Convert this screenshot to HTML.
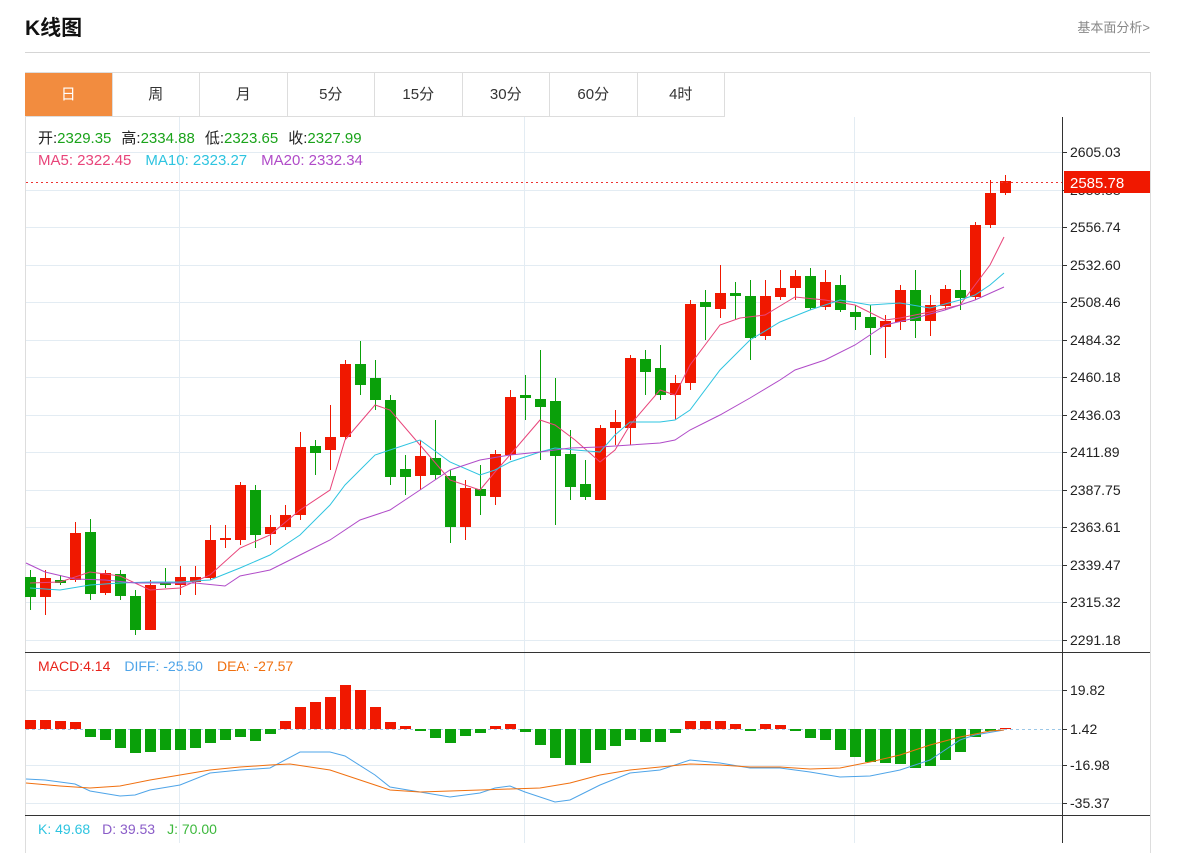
<!DOCTYPE html>
<html><head><meta charset="utf-8">
<style>
body{margin:0;background:#fff;font-family:"Liberation Sans","Noto Sans CJK SC",sans-serif;width:1202px;height:843px;overflow:hidden;position:relative}
.t{position:absolute;left:25px;top:12px;font-size:21px;font-weight:bold;color:#111}
.r{position:absolute;right:52px;top:17px;font-size:13px;color:#888}
.hl{position:absolute;left:25px;top:52px;width:1125px;height:1px;background:#d5d5d5}
.box{position:absolute;left:25px;top:72px;width:1124px;height:780px;border:1px solid #ddd;border-bottom:none}
.tabs{position:absolute;left:25px;top:72px;height:44px;display:flex;border-top:1px solid #ddd}
.tabs div{width:86.5px;height:43px;line-height:44px;text-align:center;font-size:15px;color:#333;border-right:1px solid #ddd;border-bottom:1px solid #ddd}
.tabs div.on{background:#f28c3f;color:#fff}
svg{position:absolute;left:0;top:0}
</style></head><body>
<div class="t">K线图</div><div class="r">基本面分析&gt;</div><div class="hl"></div>
<div class="box"></div>
<div class="tabs"><div class="on">日</div><div>周</div><div>月</div><div>5分</div><div>15分</div><div>30分</div><div>60分</div><div>4时</div></div>
<svg id="s" width="1202" height="843" style="top:0" font-family="Liberation Sans, Noto Sans CJK SC, sans-serif">
<g stroke="#e3ecf3" stroke-width="1">
<line x1="179.5" y1="117" x2="179.5" y2="843"/><line x1="524.5" y1="117" x2="524.5" y2="843"/><line x1="854.5" y1="117" x2="854.5" y2="843"/>
<line x1="26" y1="152.5" x2="1062" y2="152.5"/><line x1="26" y1="190.5" x2="1062" y2="190.5"/><line x1="26" y1="227.5" x2="1062" y2="227.5"/><line x1="26" y1="265.5" x2="1062" y2="265.5"/><line x1="26" y1="302.5" x2="1062" y2="302.5"/><line x1="26" y1="340.5" x2="1062" y2="340.5"/><line x1="26" y1="377.5" x2="1062" y2="377.5"/><line x1="26" y1="415.5" x2="1062" y2="415.5"/><line x1="26" y1="452.5" x2="1062" y2="452.5"/><line x1="26" y1="490.5" x2="1062" y2="490.5"/><line x1="26" y1="527.5" x2="1062" y2="527.5"/><line x1="26" y1="565.5" x2="1062" y2="565.5"/><line x1="26" y1="602.5" x2="1062" y2="602.5"/><line x1="26" y1="640.5" x2="1062" y2="640.5"/>
<line x1="26" y1="690.5" x2="1062" y2="690.5"/><line x1="26" y1="765.5" x2="1062" y2="765.5"/><line x1="26" y1="803.5" x2="1062" y2="803.5"/>
</g>
<line x1="26" y1="729.5" x2="1062" y2="729.5" stroke="#9cc8e8" stroke-dasharray="3,3"/>
<line x1="25" y1="652.5" x2="1150" y2="652.5" stroke="#333"/>
<line x1="25" y1="815.5" x2="1150" y2="815.5" stroke="#333"/>
<line x1="1062.5" y1="117" x2="1062.5" y2="843" stroke="#333"/>
<g id="cd"></g><g id="mc"></g>
<polyline fill="none" stroke="#e8447a" stroke-width="1" points="30,583 60,582 90,572 120,576 150,590 180,588 210,575 240,548 270,535 300,510 330,490 345,440 375,405 390,410 420,445 450,480 480,490 495,472 510,455 540,420 555,425 575,440 600,462 615,450 630,425 660,390 675,395 690,365 720,325 740,318 765,315 795,297 825,300 855,305 885,320 900,318 930,312 960,305 975,285 990,265 1004,237"/>
<polyline fill="none" stroke="#2ec4e0" stroke-width="1" points="30,588 60,590 90,585 120,583 150,582 180,582 210,580 240,568 270,555 300,535 330,505 345,485 375,455 390,450 420,440 450,462 480,475 495,470 510,462 540,452 555,448 575,450 600,452 615,435 630,422 660,422 675,420 690,410 720,370 750,340 780,322 810,310 840,300 870,305 900,303 930,308 960,300 975,295 990,285 1004,273"/>
<polyline fill="none" stroke="#b04bc8" stroke-width="1" points="26,563 45,572 75,579 105,580 135,583 165,583 195,583 225,586 240,576 270,570 300,555 330,540 360,520 390,510 420,490 450,470 480,460 510,455 540,452 570,448 600,447 630,445 660,443 675,440 690,430 720,415 750,398 780,380 795,370 825,360 855,345 885,325 915,318 945,310 975,300 1004,287"/>
<line x1="26" y1="182.5" x2="1062" y2="182.5" stroke="#e33" stroke-dasharray="2,3"/>
<polyline fill="none" stroke="#4ea4e8" stroke-width="1" points="26,779 45,780 75,784 90,791 120,796 135,795 150,790 180,785 210,773 240,770 270,768 300,752 330,752 345,756 375,775 390,787 420,792 450,797 480,793 495,788 510,786 525,792 555,802 570,800 600,785 630,773 660,770 690,760 720,763 750,768 780,768 810,772 840,777 870,776 900,770 930,760 945,750 960,740 975,735 1004,730"/>
<polyline fill="none" stroke="#f07010" stroke-width="1" points="26,783 60,786 90,788 120,786 150,780 180,775 210,770 240,767 270,765 290,764 330,770 360,780 390,790 420,792 450,791 480,790 510,789 540,788 570,783 600,775 630,770 660,767 690,764 720,765 750,767 780,767 810,769 840,768 870,762 900,755 930,745 960,737 990,731 1004,730"/>
<g font-size="14" fill="#222">
<text x="1070" y="157">2605.03</text><text x="1070" y="195">2580.88</text><text x="1070" y="232">2556.74</text><text x="1070" y="270">2532.60</text><text x="1070" y="307">2508.46</text><text x="1070" y="345">2484.32</text><text x="1070" y="382">2460.18</text><text x="1070" y="420">2436.03</text><text x="1070" y="457">2411.89</text><text x="1070" y="495">2387.75</text><text x="1070" y="532">2363.61</text><text x="1070" y="570">2339.47</text><text x="1070" y="607">2315.32</text><text x="1070" y="645">2291.18</text>
<text x="1070" y="695">19.82</text><text x="1070" y="734">1.42</text><text x="1070" y="770">-16.98</text><text x="1070" y="808">-35.37</text>
</g>
<g stroke="#333"><path d="M1062 152.5h5M1062 190.5h5M1062 227.5h5M1062 265.5h5M1062 302.5h5M1062 340.5h5M1062 377.5h5M1062 415.5h5M1062 452.5h5M1062 490.5h5M1062 527.5h5M1062 565.5h5M1062 602.5h5M1062 640.5h5M1062 690.5h5M1062 729.5h5M1062 765.5h5M1062 803.5h5"/></g>
<rect x="1064" y="171" width="86" height="22" fill="#f01800"/>
<text x="1070" y="188" font-size="15" fill="#fff">2585.78</text>
<g font-size="15">
<text x="38" y="143"><tspan fill="#222">开:</tspan><tspan fill="#1aa31a">2329.35</tspan><tspan fill="#222" dx="10">高:</tspan><tspan fill="#1aa31a">2334.88</tspan><tspan fill="#222" dx="10">低:</tspan><tspan fill="#1aa31a">2323.65</tspan><tspan fill="#222" dx="10">收:</tspan><tspan fill="#1aa31a">2327.99</tspan></text>
<text x="38" y="165"><tspan fill="#e8447a">MA5:  2322.45</tspan><tspan fill="#2ec4e0" dx="14">MA10:  2323.27</tspan><tspan fill="#b04bc8" dx="14">MA20:  2332.34</tspan></text>
</g>
<g font-size="14">
<text x="38" y="671"><tspan fill="#e8221a">MACD:4.14</tspan><tspan fill="#4ea4e8" dx="14">DIFF: -25.50</tspan><tspan fill="#f07010" dx="14">DEA: -27.57</tspan></text>
<text x="38" y="834"><tspan fill="#2ec4e0">K: 49.68</tspan><tspan fill="#8a5cc8" dx="12">D: 39.53</tspan><tspan fill="#3cb83c" dx="12">J: 70.00</tspan></text>
</g>
</svg>
<script>
var C=[["g",577,597,570,610],["r",578,597,570,615],["g",580,583,575,585],["r",533,580,522,582],["g",532,594,519,600],["r",573,593,570,595],["g",574,596,570,600],["g",596,630,590,635],["r",585,630,580,630],["g",582,585,568,588],["r",577,585,566,595],["r",577,582,566,595],["r",540,578,525,580],["r",538,540,525,548],["r",485,540,482,545],["g",490,535,485,548],["r",527,534,515,545],["r",515,527,505,530],["r",447,515,432,520],["g",446,453,440,475],["r",437,450,405,470],["r",364,437,360,440],["g",364,385,341,395],["g",378,400,360,410],["g",400,477,395,485],["g",469,477,455,495],["r",456,476,440,490],["g",458,475,420,480],["g",476,527,470,543],["r",488,527,480,540],["g",489,496,465,515],["r",454,497,450,505],["r",397,455,390,460],["g",395,398,375,420],["g",399,407,350,460],["g",401,456,378,525],["g",454,487,430,500],["g",484,497,460,500],["r",428,500,425,500],["r",422,428,410,445],["r",358,428,355,445],["g",359,372,350,395],["g",368,395,345,400],["r",383,395,375,420],["r",304,383,300,390],["g",302,307,290,340],["r",293,309,265,318],["g",293,296,282,320],["g",296,338,280,360],["r",296,336,280,340],["r",288,297,270,300],["r",276,288,270,300],["g",276,308,268,310],["r",282,307,270,310],["g",285,310,275,312],["g",312,317,305,330],["g",317,328,305,355],["r",321,327,315,358],["r",290,322,285,330],["g",290,321,270,338],["r",305,321,295,336],["r",289,306,285,310],["g",290,298,270,310],["r",225,297,222,300],["r",193,225,180,228],["r",181,193,175,195]];
var M=[["r",720],["r",720],["r",721],["r",722],["g",737],["g",740],["g",748],["g",753],["g",752],["g",750],["g",750],["g",748],["g",743],["g",740],["g",737],["g",741],["g",734],["r",721],["r",707],["r",702],["r",697],["r",685],["r",690],["r",707],["r",722],["r",726],["g",731],["g",738],["g",743],["g",736],["g",733],["r",726],["r",724],["g",732],["g",745],["g",758],["g",765],["g",763],["g",750],["g",746],["g",740],["g",742],["g",742],["g",733],["r",721],["r",721],["r",721],["r",724],["g",731],["r",724],["r",725],["g",731],["g",738],["g",740],["g",750],["g",757],["g",762],["g",763],["g",764],["g",768],["g",766],["g",760],["g",752],["g",737],["g",731],["r",728]];
var ns="http://www.w3.org/2000/svg",cd=document.getElementById("cd"),mc=document.getElementById("mc");
function el(g,t,a){var e=document.createElementNS(ns,t);for(var k in a)e.setAttribute(k,a[k]);g.appendChild(e);}
C.forEach(function(c,i){var x=30+i*15,col=c[0]=="r"?"#f01800":"#0aa00a";
el(cd,"line",{x1:x+.5,x2:x+.5,y1:c[3],y2:c[4],stroke:col});
el(cd,"rect",{x:x-5,y:c[1],width:11,height:Math.max(1,c[2]-c[1]),fill:col});});
M.forEach(function(c,i){var x=30+i*15,col=c[0]=="r"?"#f01800":"#0aa00a",y=c[1];
el(mc,"rect",{x:x-5,y:Math.min(y,729),width:11,height:Math.max(1,Math.abs(y-729)),fill:col});});
</script>
</body></html>
